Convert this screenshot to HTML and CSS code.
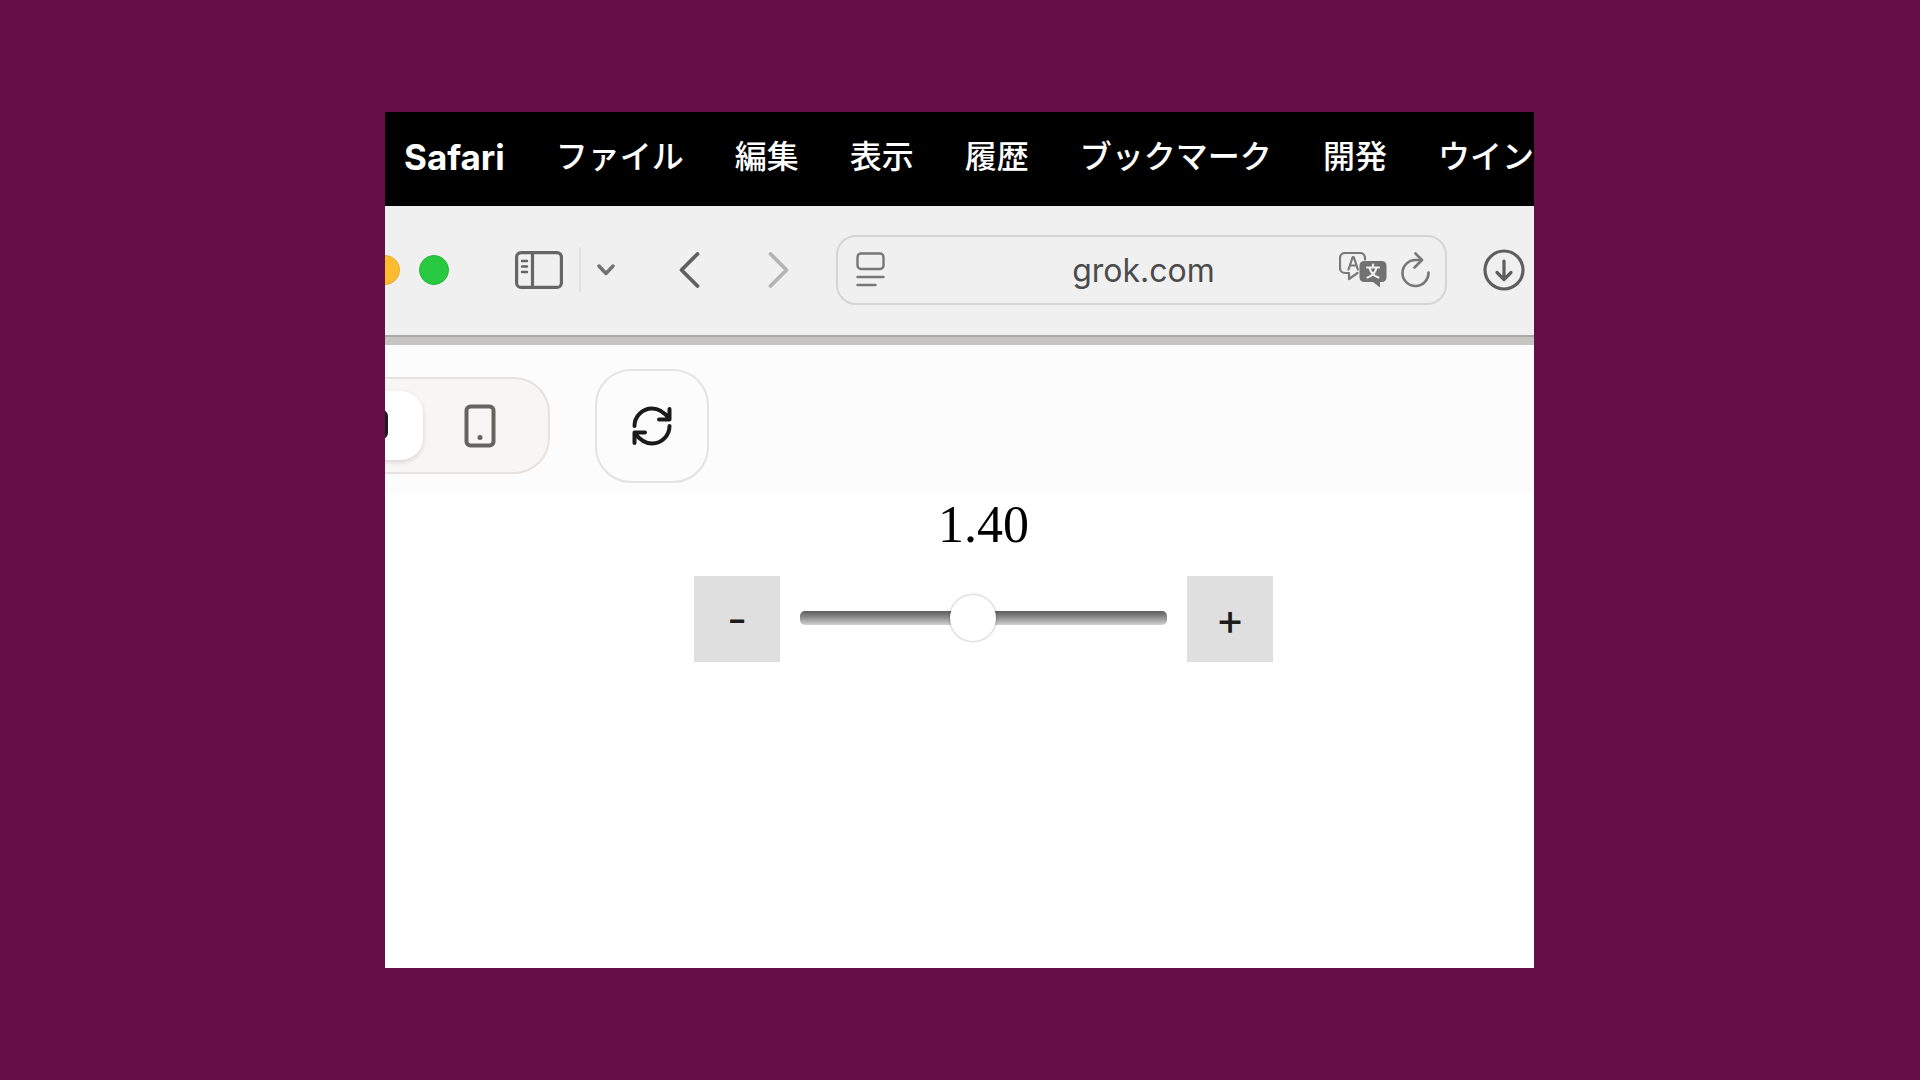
FILE: index.html
```html
<!DOCTYPE html>
<html lang="ja">
<head>
<meta charset="utf-8">
<title>grok.com</title>
<link rel="stylesheet" href="styles.css">
</head>
<body>
<main class="window">
  <nav class="menubar">
    <a class="app" href="#">Safari</a>
    <a href="#">ファイル</a>
    <a href="#">編集</a>
    <a href="#">表示</a>
    <a href="#">履歴</a>
    <a href="#">ブックマーク</a>
    <a href="#">開発</a>
    <a href="#">ウイン</a>
  </nav>

  <header class="toolbar">
    <div class="lights">
      <button class="light minimize" aria-label="しまう"></button>
      <button class="light zoom" aria-label="拡大"></button>
    </div>
    <div class="sidebar-group">
      <button class="icon" aria-label="サイドバー">
        <svg width="48" height="38" viewBox="0 0 48 38" fill="none" stroke="#666" stroke-width="3.200">
          <rect x="1.600" y="1.600" width="44.800" height="34.800" rx="4.500"/>
          <path d="M17.500 2v34"/>
          <path d="M7 10h5M7 15.500h5M7 21h5" stroke-width="2.400" stroke-linecap="round"/>
        </svg>
      </button>
      <span class="divider"></span>
      <button class="icon" aria-label="タブグループ">
        <svg width="18" height="12" viewBox="0 0 18 12" fill="none" stroke="#727272" stroke-width="3.500" stroke-linecap="round" stroke-linejoin="round"><path d="M2 2l7 7.500L16 2"/></svg>
      </button>
    </div>
    <div class="history">
      <button class="icon" aria-label="戻る">
        <svg width="21" height="36" viewBox="0 0 21 36" fill="none" stroke="#606060" stroke-width="3.800" stroke-linecap="round" stroke-linejoin="round"><path d="M18.500 2L2.500 18l16 16"/></svg>
      </button>
      <button class="icon" aria-label="進む">
        <svg width="21" height="36" viewBox="0 0 21 36" fill="none" stroke="#b4b4b4" stroke-width="3.800" stroke-linecap="round" stroke-linejoin="round"><path d="M2.500 2l16 16-16 16"/></svg>
      </button>
    </div>
    <div class="address">
      <button class="icon" aria-label="ページメニュー">
        <svg width="29" height="35" viewBox="0 0 29 35" fill="none" stroke="#777" stroke-width="2.400" stroke-linecap="round">
          <rect x="1.500" y="1.500" width="26" height="15.500" rx="3.500"/>
          <path d="M1.500 25h26M1.500 33h18"/>
        </svg>
      </button>
      <input class="url" type="text" value="grok.com" aria-label="アドレス">
      <div class="address-actions">
        <button class="icon" aria-label="翻訳">
          <svg width="48" height="36" viewBox="0 0 48 36" fill="none" stroke="#7a7a7a" stroke-width="2.200" stroke-linecap="round" stroke-linejoin="round">
            <path d="M18.500 21L10 27v-6H6a5 5 0 0 1-5-5V6a5 5 0 0 1 5-5h15a5 5 0 0 1 5 5v1.500"/>
            <path d="M9.500 17.500l4.200-12.500h1l4.200 12.500M11 13.500h6.500"/>
            <path d="M25 9h18a4.500 4.500 0 0 1 4.500 4.500v12A4.500 4.500 0 0 1 43 30h-2v5.500L34 30h-9a4.500 4.500 0 0 1-4.500-4.500v-12A4.500 4.500 0 0 1 25 9z" fill="#727272" stroke="none"/>
            <path d="M28 15.500h12M34 12.500v3M30.500 16c1.500 5 4.500 8 9 9.500M37.500 16c-1.500 5-4.500 8-9 9.500" stroke="#f0f0f0"/>
          </svg>
        </button>
        <button class="icon" aria-label="再読み込み">
          <svg width="29" height="36" viewBox="0 0 29 36" fill="none" stroke="#777" stroke-width="2.600" stroke-linecap="round" stroke-linejoin="round">
            <path d="M27.500 20.500A13 13 0 1 1 14.500 8h6"/>
            <path d="M14.500 1.500L21 8l-7.500 7.500"/>
          </svg>
        </button>
      </div>
    </div>
    <button class="icon" aria-label="ダウンロード">
      <svg width="42" height="42" viewBox="0 0 42 42" fill="none" stroke="#5e5e5e" stroke-width="3.200" stroke-linecap="round" stroke-linejoin="round">
        <circle cx="21" cy="21" r="19"/>
        <path d="M21 12v18M14 23.500l7 7 7-7"/>
      </svg>
    </button>
  </header>

  <section class="preview-bar">
    <div class="devices">
      <button class="device selected" aria-label="デスクトップ">
        <svg width="24" height="44" viewBox="0 0 24 44" fill="none" stroke="#1c1c1c" stroke-width="4"><rect x="2" y="8" width="20" height="25" rx="4"/></svg>
      </button>
      <button class="device" aria-label="タブレット">
        <svg width="32" height="44" viewBox="0 0 32 44" fill="none" stroke="#66645f" stroke-width="4">
          <rect x="2.500" y="2.500" width="27" height="39" rx="4"/>
          <circle cx="16" cy="33.500" r="2.500" fill="#66645f" stroke="none"/>
        </svg>
      </button>
    </div>
    <button class="refresh" aria-label="更新">
      <svg width="40" height="40" viewBox="0 0 40 40" fill="none" stroke="#1a1a1a" stroke-width="4" stroke-linecap="round" stroke-linejoin="round">
        <path d="M2.500 20A17.500 17.500 0 0 1 20 2.500C27 2.500 32 6 37 12.500M37.500 3v10.500H27"/>
        <path d="M37.500 20A17.500 17.500 0 0 1 20 37.500C13 37.500 8 34 3 27.500M2.500 37V26.500H13"/>
      </svg>
    </button>
  </section>

  <section class="page">
    <output class="value" for="amount">1.40</output>
    <div class="stepper">
      <button class="step" aria-label="減らす">-</button>
      <input class="slider" id="amount" type="range" min="0" max="3" step="0.01" value="1.4" aria-label="値">
      <button class="step" aria-label="増やす">+</button>
    </div>
  </section>
</main>
</body>
</html>
```
FILE: styles.css
```css
* {
  box-sizing: border-box;
}

body {
  margin: 0;
  min-height: 100vh;
  padding: 112px 0;
  display: grid;
  grid-template-columns: 385fr 1149fr 386fr;
  background: #650e47;
  font-family: Inter, "Noto Sans CJK JP", sans-serif;
}

button {
  margin: 0;
  padding: 0;
  border: 0;
  background: none;
  color: inherit;
  font: inherit;
}

svg {
  display: block;
}

.window {
  grid-column: 2;
  min-width: 0;
  display: flex;
  flex-direction: column;
  overflow: hidden;
  background: #fff;
}

.menubar {
  display: flex;
  align-items: center;
  gap: 51px;
  height: 94px;
  padding: 0 0 4px 19px;
  background: #000;
  font-size: 32px;
  font-weight: 500;
  line-height: 48px;
  white-space: nowrap;
}

.menubar a {
  color: #fff;
  text-decoration: none;
}

.menubar .app {
  font-size: 35px;
  font-weight: 700;
}

.toolbar {
  display: flex;
  align-items: center;
  height: 139px;
  padding: 0 9px 4px 0;
  background: #f0f0f0;
  border-bottom: 8px solid #c5c4c1;
  box-shadow: inset 0 -2px #a9aaa8;
}

.icon {
  flex: none;
}

.lights {
  display: flex;
  gap: 19px;
  margin-left: -15px;
}

.light {
  width: 30px;
  height: 30px;
  border-radius: 50%;
}

.minimize {
  background: #fdbc2e;
  border: 1px solid #e8a930;
}

.zoom {
  background: #28c840;
  border: 1px solid #25b53b;
}

.sidebar-group {
  display: flex;
  align-items: center;
  gap: 16px;
  margin-left: 66px;
}

.divider {
  width: 2px;
  height: 45px;
  background: #e1e1e1;
}

.history {
  display: flex;
  gap: 68px;
  margin-left: 64px;
}

.address {
  flex: 1;
  min-width: 0;
  display: grid;
  grid-template-columns: 92px 1fr 92px;
  align-items: center;
  height: 70px;
  margin: 0 36px 0 47px;
  padding: 0 14px 0 18px;
  border: 2px solid #d5d5d5;
  border-radius: 20px;
}

.url {
  min-width: 0;
  width: 100%;
  padding: 2px 0 0;
  border: 0;
  background: none;
  color: #4b4b4b;
  font: 400 32px/40px Inter, sans-serif;
  text-align: center;
}

.address-actions {
  display: flex;
  gap: 14px;
}

.preview-bar {
  display: flex;
  align-items: center;
  gap: 45px;
  height: 148px;
  padding-top: 13px;
  background: #fcfcfc;
}

.devices {
  display: flex;
  align-items: center;
  height: 97px;
  margin-left: -70px;
  padding: 0 11px;
  background: #f8f6f4;
  border: 2px solid #e6e2df;
  border-radius: 36px;
}

.device {
  display: grid;
  place-items: center;
  width: 114px;
  height: 69px;
  border-radius: 22px;
}

.device.selected {
  width: 95px;
  background: #fff;
  box-shadow: 0 2px 5px rgb(0 0 0 / 14%);
}

.refresh {
  display: grid;
  place-items: center;
  width: 114px;
  height: 114px;
  border: 2px solid #e4e3e2;
  border-radius: 36px;
}

.page {
  flex: 1;
  display: flex;
  flex-direction: column;
  align-items: center;
  padding: 4px 0 32px 48px;
}

.value {
  color: #000;
  font: 400 52px/56px "Liberation Serif", serif;
}

.stepper {
  display: flex;
  align-items: center;
  gap: 20px;
  margin-top: 23px;
}

.step {
  width: 86px;
  height: 86px;
  background: #dfdfdf;
  color: #1c1c1c;
  font-size: 44px;
  font-weight: 400;
}

.slider {
  appearance: none;
  width: 367px;
  height: 48px;
  margin: 0 0 2px;
  background: none;
}

.slider::-webkit-slider-runnable-track {
  height: 14px;
  border-radius: 5px;
  background: linear-gradient(#5c5c5c, #8c8c8c 45%, #d2d2d2);
}

.slider::-webkit-slider-thumb {
  appearance: none;
  width: 46px;
  height: 46px;
  margin-top: -16px;
  border-radius: 50%;
  background: #fff;
  box-shadow: 0 0 2px 1px rgb(0 0 0 / 18%);
}
```
